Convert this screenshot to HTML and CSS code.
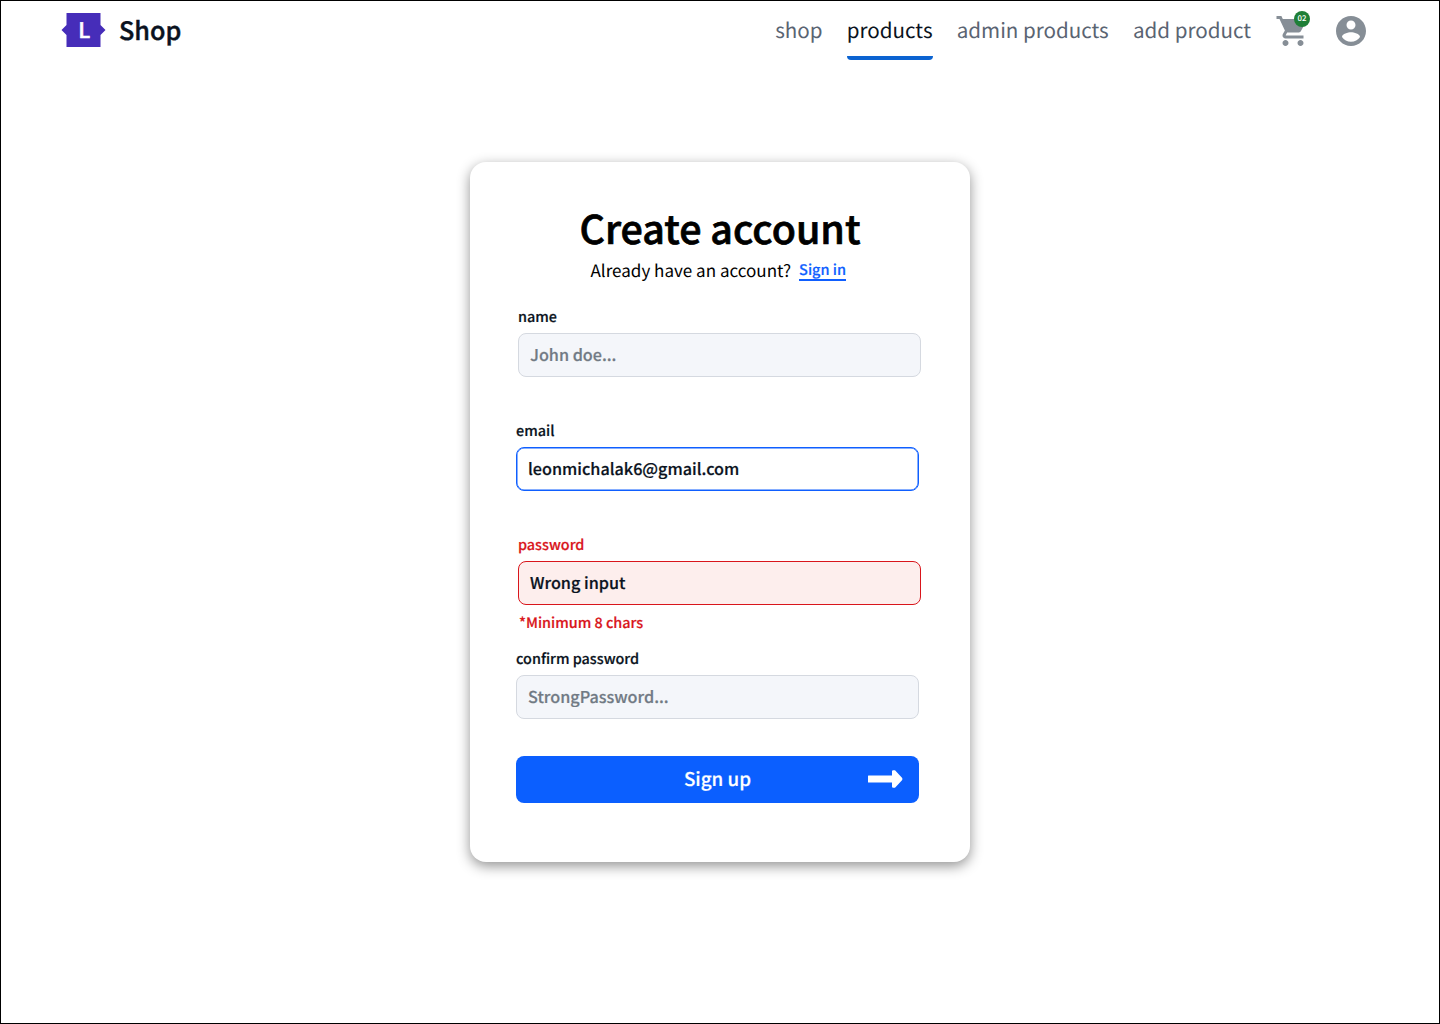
FILE: index.html
```html
<!DOCTYPE html>
<html lang="en">
<head>
<meta charset="utf-8">
<title>Shop – Create account</title>
<link rel="stylesheet" href="styles.css">
</head>
<body>
<div class="page">
  <header class="topbar">
    <a class="brand">
      <svg class="brand-mark" width="45" height="34" viewBox="0 0 45 34"><path fill="#462db9" d="M5.500 0H39.500V12L44.500 17L39.500 22V34H5.500V22L0.500 17L5.500 12Z"/><text x="23.300" y="24.700" text-anchor="middle" class="brand-letter">L</text></svg>
      <span class="brand-name">Shop</span>
    </a>
    <nav class="nav">
      <a class="nav-link">shop</a>
      <a class="nav-link active">products</a>
      <a class="nav-link">admin products</a>
      <a class="nav-link">add product</a>
    </nav>
    <div class="cart">
      <svg width="36" height="36" viewBox="0 0 24 24"><path fill="#868e96" d="M7 18c-1.100 0-1.990.9-1.990 2S5.900 22 7 22s2-.9 2-2-.9-2-2-2zM1 2v2h2l3.600 7.590-1.350 2.450c-.16.28-.25.61-.25.960 0 1.100.9 2 2 2h12v-2H7.420c-.14 0-.25-.11-.25-.25l.03-.12.9-1.630h7.450c.75 0 1.410-.41 1.750-1.030l3.580-6.490c.08-.14.120-.31.120-.48 0-.55-.45-1-1-1H5.210l-.94-2H1zm16 16c-1.100 0-1.990.9-1.990 2s.89 2 1.990 2 2-.9 2-2-.9-2-2-2z"/></svg>
      <span class="badge">02</span>
    </div>
    <svg class="user" width="36" height="36" viewBox="0 0 24 24"><path fill="#868e96" d="M12 2C6.480 2 2 6.480 2 12s4.480 10 10 10 10-4.480 10-10S17.520 2 12 2zm0 3c1.660 0 3 1.340 3 3s-1.340 3-3 3-3-1.340-3-3 1.340-3 3-3zm0 14.200c-2.500 0-4.710-1.280-6-3.220.03-1.990 4-3.080 6-3.080 1.990 0 5.970 1.090 6 3.080-1.290 1.940-3.500 3.220-6 3.220z"/></svg>
  </header>
  <main class="card">
    <h1 class="title">Create account</h1>
    <p class="subtitle">Already have an account? <a class="signin">Sign in</a></p>
    <form class="form">
      <div class="field shifted"><label class="label">name</label><div class="input">John doe...</div></div>
      <div class="field"><label class="label">email</label><div class="input focused">leonmichalak6@gmail.com</div></div>
      <div class="field shifted error"><label class="label">password</label><div class="input">Wrong input</div><p class="hint">*Minimum 8 chars</p></div>
      <div class="field last"><label class="label">confirm password</label><div class="input">StrongPassword...</div></div>
      <div class="submit"><span class="submit-text">Sign up</span>
        <svg width="35" height="18" viewBox="0 0 35 18"><path fill="#fff" d="M0.500 5.500H24V1.500Q24 0.300 25.200 0.300H27L34 7.700Q35 9 34 10.300L27 17.700H25.200Q24 17.700 24 16.500V12.500H0.500Q0 12.500 0 12V6Q0 5.500 0.500 5.500Z"/></svg>
      </div>
    </form>
  </main>
</div>
</body>
</html>
```
FILE: styles.css
```css
* { box-sizing: border-box; }
body { margin: 0; font-family: "Noto Sans CJK SC", "Noto Sans", sans-serif; color: #0a1220; background: #fff; text-rendering: geometricPrecision; }
h1, p { margin: 0; }
.page { width: 1440px; height: 1024px; border: 1px solid #000; }
.topbar { display: flex; height: 59px; padding: 0 70px 0 60px; }
.brand { display: flex; align-items: center; height: 58px; gap: 13px; margin-right: auto; }
.brand-letter { font-size: 21.5px; font-weight: 500; fill: #fff; stroke: #fff; stroke-width: 0.5px; }
.brand-name { font-size: 25.2px; line-height: 58px; font-weight: 500; -webkit-text-stroke: 0.4px; }
.nav { display: flex; gap: 24.2px; }
.nav-link { font-size: 20.6px; line-height: 57px; color: #5a6472; }
.nav-link.active { position: relative; color: #0a1220; }
.nav-link.active::after { content: ""; position: absolute; left: 0; right: 0; bottom: 0; height: 4px; border-radius: 0 0 4px 4px; background: #0b63d1; }
.cart { position: relative; margin-left: 24px; padding-top: 12px; }
.badge { position: absolute; left: 19px; top: 10px; width: 16px; height: 16px; border-radius: 8px; background: #1f7f37; color: #fff; font-size: 7.8px; font-weight: 500; line-height: 16px; text-align: center; }
.user { margin: 12px 0 0 22px; }
.card { width: 500px; height: 700px; margin: 102px auto 0; padding: 36px 46px; border-radius: 16px; box-shadow: 0 4px 13px rgba(0,0,0,.43); }
.title { color: #000; font-size: 39.4px; line-height: 60px; font-weight: 500; text-align: center; -webkit-text-stroke: 0.7px; }
.subtitle { display: flex; justify-content: center; gap: 8px; height: 26px; margin-top: -1px; padding-right: 3.5px; color: #000; font-size: 17.05px; line-height: 26px; }
.signin { height: 24px; font-size: 14.5px; line-height: 26px; font-weight: 500; color: #0f5fff; border-bottom: 2px solid; -webkit-text-stroke: 0.2px; }
.form { margin-top: 20px; }
.field { height: 114px; width: 403px; }
.shifted { margin-left: 2px; }
.label, .hint { font-size: 14.4px; font-weight: 500; line-height: 28px; -webkit-text-stroke: 0.2px; }
.label { display: block; height: 30px; }
.input { height: 44px; border: 1px solid #d5d9e0; border-radius: 8px; background: #f4f6fa; font-size: 16.2px; font-weight: 500; line-height: 41px; padding: 0 11px; color: #717a84; -webkit-text-stroke: 0.2px; }
.focused { background: #fff; border-color: #0f5fff; color: #0a1220; box-shadow: inset 0 0 0 .5px #0f5fff; }
.error { color: #d9151b; }
.error .input { color: #0a1220; background: #fdeeed; border-color: #d9151b; }
.hint { margin: 4px 0 0 1px; }
.last { height: 111px; }
.submit { width: 403px; height: 47px; border-radius: 8px; background: #0b5fff; color: #fff; display: grid; grid-template-columns: 1fr auto 1fr; align-items: center; }
.submit-text { grid-column: 2; font-size: 18.8px; line-height: 46px; margin-bottom: 1px; font-weight: 500; -webkit-text-stroke: 0.2px; }
.submit svg { justify-self: end; margin: 0 16px 1px 0; }
```
